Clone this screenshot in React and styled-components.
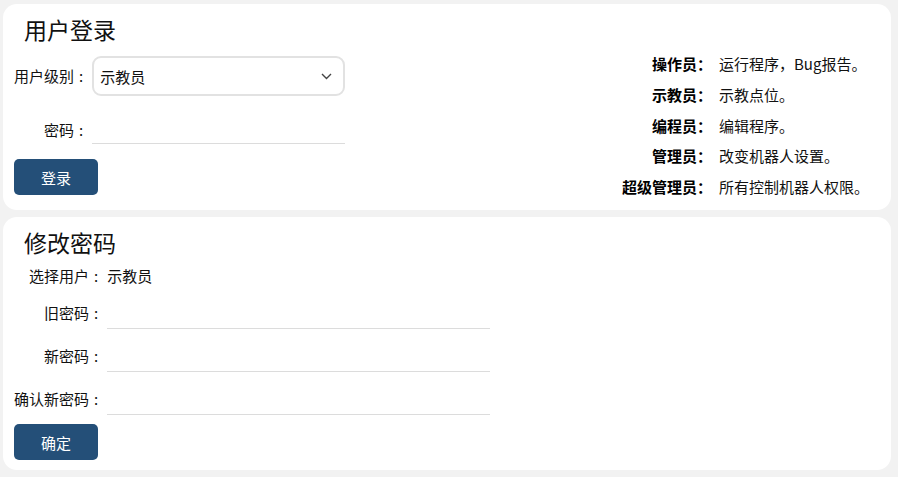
import React from "react";
import styled, { createGlobalStyle } from "styled-components";

const GlobalStyle = createGlobalStyle`
  * { box-sizing: border-box; }
  body {
    margin: 0;
    background: #f2f2f2;
    font-family: "Noto Sans CJK SC", "Noto Sans", sans-serif;
    color: #111;
  }
`;

const ROLES = [
  ["操作员", "运行程序，Bug报告。"],
  ["示教员", "示教点位。"],
  ["编程员", "编辑程序。"],
  ["管理员", "改变机器人设置。"],
  ["超级管理员", "所有控制机器人权限。"],
];

const Page = styled.div`
  display: flex;
  flex-direction: column;
  gap: 7px;
  padding: 4px 7px 7px 3px;
  height: 477px;
`;

const Panel = styled.section`
  background: #fff;
  border-radius: 14px;
  padding: 10px 11px ${(p) => p.$padBottom}px;
  flex: ${(p) => (p.$grow ? 1 : "none")};
`;

const LoginPanel = styled(Panel)`
  display: flex;
  justify-content: space-between;
  align-items: flex-start;
`;

const Title = styled.h2`
  margin: 0 0 0 10px;
  font-size: 23px;
  font-weight: 400;
  line-height: 30px;
  color: #111;
`;

const FormGrid = styled.div`
  display: grid;
  grid-template-columns: auto ${(p) => p.$field}px;
  justify-content: start;
  align-items: center;
  margin-top: ${(p) => p.$top}px;
`;

const Label = styled.label`
  justify-self: end;
  font-size: 15px;
  line-height: 20px;
  white-space: nowrap;

  &::after {
    content: ":";
    margin: 0 9px 0 5px;
  }
`;

const Cell = styled.div`
  margin-top: ${(p) => p.$top || 0}px;
`;

const LabelCell = styled(Cell)`
  justify-self: end;
`;

const SelectBox = styled.div`
  display: flex;
  align-items: center;
  justify-content: space-between;
  height: 40px;
  padding: 0 11px 0 6px;
  border: 2px solid #e2e2e2;
  border-radius: 9px;
  font-size: 15px;
  color: #111;
`;

const LineInput = styled.input`
  display: block;
  width: 100%;
  height: 30px;
  border: none;
  border-bottom: 1px solid #dcdcdc;
  outline: none;
  background: transparent;
  font: inherit;
  font-size: 15px;
`;

const Value = styled.span`
  font-size: 15px;
  line-height: 30px;
`;

const Button = styled.button`
  display: block;
  width: 84px;
  height: 36px;
  margin-top: ${(p) => p.$top}px;
  border: none;
  border-radius: 5px;
  background: #244f78;
  color: #fff;
  font-family: inherit;
  font-size: 15px;
  cursor: pointer;
`;

const Info = styled.dl`
  display: grid;
  grid-template-columns: auto auto;
  column-gap: 7px;
  row-gap: 14.75px;
  margin: 42px 11px 0 0;
  font-size: 15px;
  line-height: 16px;
`;

const Role = styled.dt`
  justify-self: end;
  font-weight: 700;
  color: #000;
`;

const RoleDesc = styled.dd`
  margin: 0;
  color: #111;
`;

const Chevron = () => (
  <svg width="11" height="7" viewBox="0 0 11 7" fill="none">
    <path d="M1 1l4.5 4.5L10 1" stroke="#444" strokeWidth="1.4" />
  </svg>
);

export default function App() {
  return (
    <>
      <GlobalStyle />
      <Page>
        <LoginPanel $padBottom={15}>
          <div>
            <Title>用户登录</Title>
            <FormGrid $field={253} $top={12}>
              <Label>用户级别</Label>
              <SelectBox>
                <span>示教员</span>
                <Chevron />
              </SelectBox>
              <LabelCell $top={18}>
                <Label>密码</Label>
              </LabelCell>
              <Cell $top={18}>
                <LineInput type="password" />
              </Cell>
            </FormGrid>
            <Button $top={15}>登录</Button>
          </div>
          <Info>
            {ROLES.map(([role, desc]) => (
              <React.Fragment key={role}>
                <Role>{role}：</Role>
                <RoleDesc>{desc}</RoleDesc>
              </React.Fragment>
            ))}
          </Info>
        </LoginPanel>

        <Panel $padBottom={10} $grow>
          <Title>修改密码</Title>
          <FormGrid $field={383} $top={4}>
            <Label>选择用户</Label>
            <Value>示教员</Value>
            <LabelCell $top={4}>
              <Label>旧密码</Label>
            </LabelCell>
            <Cell $top={8}>
              <LineInput type="password" />
            </Cell>
            <LabelCell $top={9}>
              <Label>新密码</Label>
            </LabelCell>
            <Cell $top={13}>
              <LineInput type="password" />
            </Cell>
            <LabelCell $top={9}>
              <Label>确认新密码</Label>
            </LabelCell>
            <Cell $top={13}>
              <LineInput type="password" />
            </Cell>
          </FormGrid>
          <Button $top={9}>确定</Button>
        </Panel>
      </Page>
    </>
  );
}
